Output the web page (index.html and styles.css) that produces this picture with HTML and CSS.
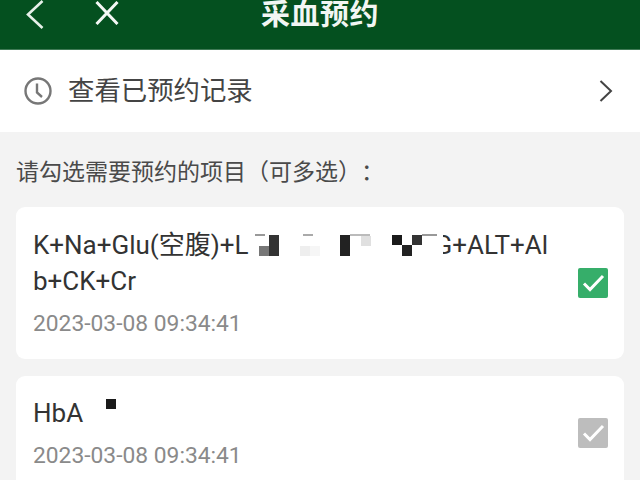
FILE: index.html
```html
<!DOCTYPE html>
<html lang="zh">
<head>
<meta charset="utf-8">
<title>采血预约</title>
<link rel="stylesheet" href="styles.css">
</head>
<body>
<header class="topbar">
  <svg class="nav-back" viewBox="0 0 20 30"><path d="M17.5 1 3 14.5 17.5 28"/></svg>
  <svg class="nav-close" viewBox="0 0 24 24"><path d="M1.5 1 22.5 23M22.5 1 1.5 23"/></svg>
  <h1 class="title">采血预约</h1>
</header>
<div class="history">
  <svg class="clock" viewBox="0 0 28 28"><circle cx="14" cy="14" r="12.5"/><path d="M13 6.5V15.5L18 20"/></svg>
  <span class="history-text">查看已预约记录</span>
  <svg class="chev" viewBox="0 0 14 22"><path d="M1.5 1 12 11 1.5 21"/></svg>
</div>
<main class="content">
  <p class="hint">请勾选需要预约的项目（可多选）：</p>
  <section class="card">
    <div class="info">
      <div class="name">K+Na+Glu(空腹)+L<span class="gap-a"></span>G+ALT+Al<br>b+CK+Cr</div>
      <div class="date">2023-03-08 09:34:41</div>
      <i class="mosaic b11"></i>
      <i class="mosaic b1"></i><i class="mosaic b2"></i><i class="mosaic b3"></i><i class="mosaic b4"></i>
      <i class="mosaic b5"></i><i class="mosaic b6"></i><i class="mosaic b7"></i><i class="mosaic b8"></i><i class="mosaic b9"></i>
      <i class="mosaic t1"></i><i class="mosaic t2"></i><i class="mosaic t3"></i><i class="mosaic t4"></i>
    </div>
    <svg class="check on" viewBox="0 0 30 30"><path d="M6 15.5 12 21.5 25 8"/></svg>
  </section>
  <section class="card second">
    <div class="info">
      <div class="name">HbA</div>
      <div class="date">2023-03-08 09:34:41</div>
      <i class="mosaic b10"></i>
    </div>
    <svg class="check off" viewBox="0 0 30 30"><path d="M6 15.5 12 21.5 25 8"/></svg>
  </section>
</main>
</body>
</html>
```
FILE: styles.css
```css
* { box-sizing: border-box; }
html, body { margin: 0; height: 100%; overflow: hidden; }
body {
  width: 640px;
  height: 480px;
  background: #f3f3f3;
  font-family: Roboto, "Noto Sans CJK SC", sans-serif;
  color: #333;
  text-spacing-trim: space-all;
}
.topbar {
  position: relative;
  height: 50px;
  background: #04501f;
  border-bottom: 1px solid #3f7a55;
  display: flex;
  justify-content: center;
}
.nav-back, .nav-close {
  position: absolute;
  fill: none;
  stroke: #e6f0e9;
}
.nav-back { left: 25px; top: 0; width: 20px; height: 30px; stroke-width: 2.6; }
.nav-close { left: 95px; top: 1px; width: 24px; height: 24px; stroke-width: 3; stroke: #f4f8f5; }
.title {
  margin: -6px 0 0;
  font-size: 29px;
  line-height: 42px;
  font-weight: 700;
  color: #f2f6f3;
  letter-spacing: .5px;
}
.history {
  height: 82px;
  background: #fff;
  display: flex;
  align-items: center;
  padding: 0 27px 0 24px;
}
.clock { width: 28px; height: 28px; fill: none; stroke: #777; stroke-width: 2.4; }
.history-text { margin: -6px 0 0 16px; flex: 1; font-size: 26.4px; color: #444; }
.chev { width: 14px; height: 22px; fill: none; stroke: #444; stroke-width: 2; }
.content { padding: 26px 16px 0; }
.hint { margin: 0; font-size: 23px; line-height: 30px; color: #4a4a4a; }
.card {
  margin-top: 19px;
  background: #fff;
  border-radius: 9px;
  height: 152px;
  padding: 20px 16px 0 17px;
  display: flex;
  align-items: flex-start;
}
.card.second { margin-top: 17px; padding-top: 19px; }
.info { position: relative; flex: 1; }
.name { font-size: 26px; line-height: 36px; color: #333; }
.gap-a { display: inline-block; width: 186px; height: 1px; }
.date { margin-top: 10px; font-size: 22.8px; line-height: 30px; color: #8a8a8a; }
.second .date { margin-top: 10px; }
.check { width: 30px; height: 30px; border-radius: 2px; margin-top: 41px; fill: none; stroke: #fff; stroke-width: 3; }
.check.on { background: #36ae6a; }
.check.off { background: #bdbdbd; }
.second .check { margin-top: 23px; }
.mosaic { position: absolute; display: block; width: 10px; height: 10px; }
.b1 { left: 226px; top: 19px; background: #777; }
.b2 { left: 236px; top: 8px; height: 21px; background: #333; }
.b3 { left: 267px; top: 19px; background: #eee; }
.b4 { left: 277px; top: 19px; background: #f6f6f6; }
.b5 { left: 307px; top: 8px; height: 21px; background: #222; }
.b6 { left: 328px; top: 9px; background: #e0e0e0; }
.b7 { left: 359px; top: 8px; background: #1a1a1a; }
.b8 { left: 369px; top: 18px; height: 11px; background: #222; }
.b9 { left: 379px; top: 8px; background: #333; }
.b10 { left: 73px; top: 4px; background: #1a1a1a; }
.b11 { left: 389px; top: 8px; width: 21px; height: 24px; background: #fff; }
.t1 { left: 222px; top: 7px; height: 2px; background: #999; }
.t2 { left: 270px; top: 7px; height: 2px; background: #aaa; }
.t3 { left: 389px; top: 7px; width: 15px; height: 2px; background: #999; }
.t4 { left: 317px; top: 7px; width: 20px; height: 2px; background: #bbb; }
```
